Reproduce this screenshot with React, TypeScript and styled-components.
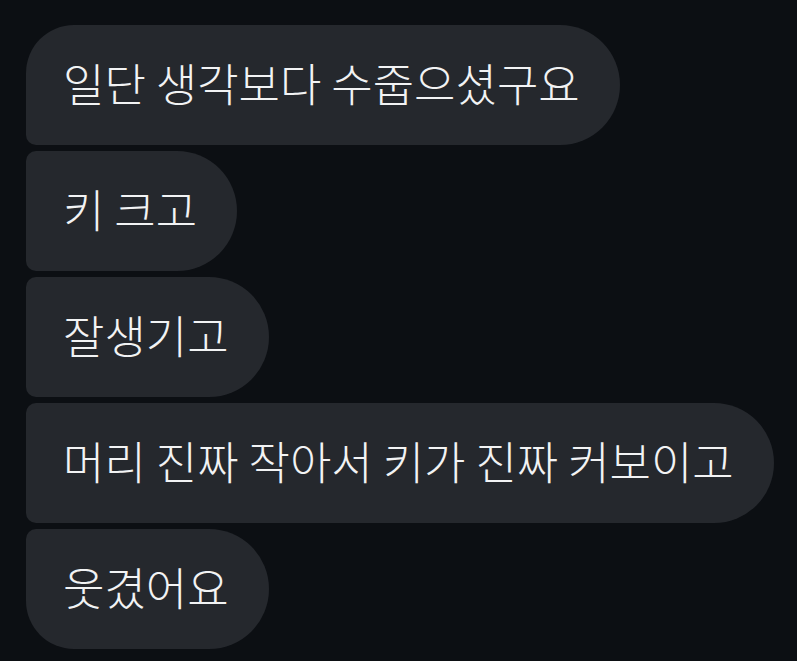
import React from 'react';
import styled, {createGlobalStyle} from "styled-components";

type Position = 'first' | 'middle' | 'last';

const messages = [
    "일단 생각보다 수줍으셨구요",
    "키 크고",
    "잘생기고",
    "머리 진짜 작아서 키가 진짜 커보이고",
    "웃겼어요",
];

export default function App() {
    return (
        <>
            <GlobalStyle/>
            <Thread>
                {messages.map((text, i) => (
                    <Bubble
                        key={i}
                        $position={i === 0 ? 'first' : i === messages.length - 1 ? 'last' : 'middle'}
                    >
                        {text}
                    </Bubble>
                ))}
            </Thread>
        </>
    );
}

const GlobalStyle = createGlobalStyle`
    html, body {
        margin: 0;
        background: #0c0f13;
    }
`;

const Thread = styled.div`
    display: flex;
    flex-direction: column;
    align-items: flex-start;
    gap: 6px;
    padding: 25px 0 0 26px;
    min-height: 661px;
    box-sizing: border-box;
    background: #0c0f13;
`;

const Bubble = styled.div<{ $position: Position }>`
    background: #25282d;
    color: #f2f3f4;
    font-family: "Noto Sans CJK KR", "Noto Sans", sans-serif;
    font-size: 45px;
    font-weight: 300;
    line-height: 60px;
    padding: 28px 40px 32px 37px;
    white-space: nowrap;
    border-radius: ${p =>
        p.$position === 'first' ? '48px 60px 60px 10px'
            : p.$position === 'last' ? '10px 60px 60px 48px'
            : '10px 60px 60px 10px'};
`;
